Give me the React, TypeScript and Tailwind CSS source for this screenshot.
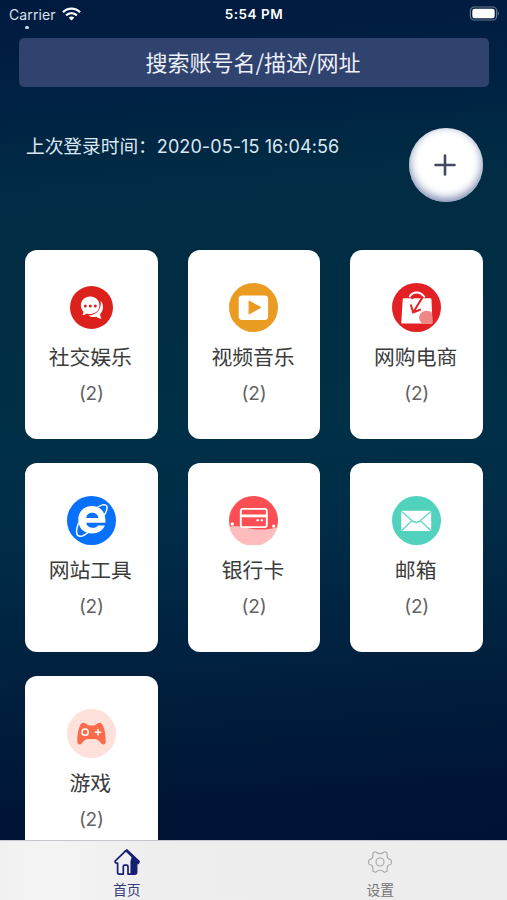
import type { ReactNode } from "react";

const cjk = "font-['Inter','Noto_Sans_CJK_SC',sans-serif]";

function Disc({ children, fill, r = 24.5 }: { children: ReactNode; fill: string; r?: number }) {
  return (
    <svg viewBox="0 0 49 49" className="block h-[49px] w-[49px]" fill="none">
      <circle cx="24.5" cy="24.5" r={r} fill={fill} />
      {children}
    </svg>
  );
}

const ChatIcon = () => (
  <Disc fill="#dc211d" r={21.5}>
    <path
      d="M33.6 17.8C36.6 20.6 37 27.6 33.2 31C33 32.800 33.800 34.500 34.500 35.800C32.200 35.600 30.600 34.600 29.400 33.700C26.300 34.500 23.300 33.900 21.600 32.500C29 32.500 35.300 26 33.600 17.800Z"
      fill="#fff"
    />
    <path
      d="M23.200 13.600C28.500 13.600 32.500 17.500 32.500 22.300C32.500 27.200 28.500 31 23.200 31C21.900 31 20.700 30.800 19.600 30.400C18.400 31.400 16.900 32 15.300 32.100C16.200 31 16.500 30 16.400 28.500C14.800 26.900 13.900 24.800 13.900 22.300C13.900 17.500 17.900 13.600 23.200 13.600Z"
      fill="#fff"
    />
    <g fill="#dc211d">
      <circle cx="18.300" cy="23" r="1.500" />
      <circle cx="23.300" cy="23" r="1.500" />
      <circle cx="28.300" cy="23" r="1.500" />
    </g>
  </Disc>
);

const VideoIcon = () => (
  <Disc fill="#e99b22">
    <rect x="9.700" y="12.600" width="29.400" height="24.400" rx="3.400" fill="#fff" />
    <path d="M20.200 18.200V30.600L31.300 24.400Z" fill="#e99b22" stroke="#e99b22" strokeWidth="1.300" strokeLinejoin="round" />
  </Disc>
);

const ShopIcon = () => (
  <Disc fill="#e32024">
    <path d="M12 15.300H38.200Q39.400 15.300 39.500 16.500L40.400 39.400Q40.400 40.600 39.200 40.600H10.400Q9.200 40.600 9.300 39.400L10.700 16.500Q10.800 15.300 12 15.300Z" fill="#fff" />
    <path d="M17.800 13.400C20.500 8.300 28.300 7.800 32.200 13.700" stroke="#fff" strokeWidth="2" strokeLinecap="round" />
    <path d="M20 16C21.500 11.300 27.500 11.500 30.300 14.600L21.300 29.300M18.700 21.500L21.200 29.500L28.800 26.500" stroke="#e32024" strokeWidth="2" />
    <path d="M39.900 29.600L40.400 40.600H30.300C25.500 37 26.200 29.700 32.300 28C35 27.300 38 28 39.900 29.600Z" fill="#f08786" />
  </Disc>
);

const BrowserIcon = () => (
  <Disc fill="#0870fb">
    <path
      d="M29.500 12C33.500 8.600 38.500 7.700 39.700 10C40.600 11.800 39.700 15 37.700 18.600M12.600 25C9.800 30 8.600 36.500 10.500 39C12.600 41.500 17.500 39.500 21.700 36"
      stroke="#fff"
      strokeWidth="1.500"
      strokeLinecap="round"
    />
    <path
      fillRule="evenodd"
      d="M25 10C33.300 10 39 15.800 38.500 26.800H19.300C19.700 32.600 28.800 33.300 30.900 29.500H37.900C35.700 34.600 31 37.500 25 37.500C16.700 37.500 11.300 31.700 11.300 23.700C11.300 15.700 17 10 25 10ZM19.300 21.900H31.300C30.800 15.100 19.800 15.100 19.300 21.900Z"
      fill="#fff"
    />
  </Disc>
);

const CardIcon = () => (
  <Disc fill="#fc4e53">
    <path d="M.4 30.700C8 28.600 15.500 32 24 33C33 34.300 41 33.200 48.200 31.200A24.500 24.500 0 0 1 .4 30.700Z" fill="#ffbcbf" />
    <rect x="11.800" y="12.900" width="26" height="18.200" rx="2" fill="#fc4e53" stroke="#fff" strokeWidth="1.900" />
    <path d="M12 19.900H37.600" stroke="#fff" strokeWidth="2.800" />
    <g fill="#fff">
      <circle cx="28.700" cy="24.300" r="1.200" />
      <circle cx="32.800" cy="24.300" r="1.200" />
      <circle cx="3.300" cy="28" r="1.700" />
      <circle cx="44.700" cy="30.100" r="1.700" />
    </g>
  </Disc>
);

const MailIcon = () => (
  <Disc fill="#50d2bd">
    <rect x="9.200" y="14.700" width="30" height="20.300" rx=".8" fill="#fff" />
    <path d="M9.600 15.400L21.600 26L22.800 25.400L24.200 26.800L25.600 25.400L26.800 26L38.800 15.400M9.700 34.500L20 24.600M38.700 34.500L28.400 24.600" stroke="#50d2bd" strokeWidth="1.200" />
  </Disc>
);

const GameIcon = () => (
  <Disc fill="#ffe1dc">
    <path
      d="M16 13.700C18.300 13.700 19.500 15.600 21.200 16.200C23 16.700 26 16.700 27.800 16.200C29.500 15.600 30.700 13.700 33 13.700C36.500 13.700 38.800 24 38.700 32.400C38.700 35.800 36 36.200 34.200 34.200C31.700 31.400 30 30 27.500 30H21.500C19 30 17.300 31.400 14.800 34.200C13 36.200 10.300 35.800 10.300 32.400C10.200 24 12.500 13.700 16 13.700Z"
      fill="#fb6b4b"
    />
    <circle cx="18.100" cy="23.200" r="3.100" stroke="#fff" strokeWidth="1.500" />
    <path d="M31 19.900V26.500M27.700 23.200H34.300" stroke="#fff" strokeWidth="1.500" />
  </Disc>
);

const categories: { name: string; icon: ReactNode }[] = [
  { name: "社交娱乐", icon: <ChatIcon /> },
  { name: "视频音乐", icon: <VideoIcon /> },
  { name: "网购电商", icon: <ShopIcon /> },
  { name: "网站工具", icon: <BrowserIcon /> },
  { name: "银行卡", icon: <CardIcon /> },
  { name: "邮箱", icon: <MailIcon /> },
  { name: "游戏", icon: <GameIcon /> },
];

function StatusBar() {
  return (
    <div className="relative grid h-[38px] shrink-0 grid-cols-3 pr-[7px] pl-[9px] text-white">
      <div className="flex h-7 items-center gap-[6px]">
        <span className="text-[14px] tracking-[0.120px] text-[#dbe1ec]">Carrier</span>
        <svg viewBox="0 0 19 14" className="h-[14px] w-[19px]" fill="none" stroke="#fff" strokeWidth="2.300">
          <path d="M1 5.300C5.700.4 13.300.4 18 5.300M4.100 8.400C7.200 5.300 11.800 5.300 14.900 8.400" />
          <path d="M9.500 13.500L6.700 10.700C8.300 9.200 10.700 9.200 12.300 10.700Z" fill="#fff" stroke="none" />
        </svg>
      </div>
      <div className="flex h-7 items-center justify-center pr-[1px] text-[13.500px] font-semibold tracking-[0.500px]">5:54 PM</div>
      <div className="flex h-[26px] items-center justify-end">
        <svg viewBox="0 0 31 15" className="h-[15px] w-[31px]" fill="none">
          <rect x="1.400" y="1" width="26.200" height="13" rx="3.800" stroke="#66788d" strokeWidth="1.200" />
          <rect x="3.300" y="2.800" width="22.400" height="9.400" rx="2.200" fill="#fff" />
          <path d="M28.800 5.300Q31 7.500 28.800 9.700Z" fill="#66788d" />
        </svg>
      </div>
      <span className="absolute top-[26px] left-[25px] h-[3px] w-1 rounded-full bg-[#c9d8ea]" />
    </div>
  );
}

function HomeIcon() {
  return (
    <svg viewBox="0 0 26 26" className="h-[26px] w-[26px]" fill="none" stroke="#172071" strokeWidth="1.700" strokeLinejoin="round">
      <path d="M13 1L25 12.300Q25.100 14.900 22.600 14.300V23.500Q22.600 25.100 20.800 25.100H16.500L17.500 23V12L11 2.500Z" fill="#172071" />
      <path d="M11.900 1.600L1.100 12.200Q1 14.600 3.600 14V23.500Q3.600 25.100 5.300 25.100H9.300V17.500Q9.300 16.200 10.600 16.200H12.700Q14 16.200 14 17.500V25.100H17.300V12.500L18.200 9.500V7.600Z" fill="#f0f0f2" />
    </svg>
  );
}

function GearIcon() {
  return (
    <svg viewBox="0 0 24 22" className="h-[22px] w-6" fill="none" stroke="#a6a6a6" strokeWidth="1.100" strokeLinejoin="round">
      <path d="M6.700.9Q7.500.5 8.200 1.200Q12 4.200 15.800 1.200Q16.500.5 17.300.9L18.800 1.700Q19.400 2.200 19.100 3.200Q18.400 7.500 22.600 8.700Q23.300 9 23.300 9.700V12.300Q23.300 13 22.600 13.300Q18.400 14.500 19.100 18.800Q19.400 19.800 18.800 20.300L17.300 21.100Q16.500 21.500 15.800 20.800Q12 17.800 8.200 20.800Q7.500 21.500 6.700 21.100L5.200 20.300Q4.600 19.800 4.900 18.800Q5.600 14.500 1.400 13.300Q.7 13 .7 12.300V9.700Q.7 9 1.400 8.700Q5.600 7.500 4.900 3.200Q4.600 2.200 5.200 1.700Z" />
      <circle cx="12" cy="11" r="4" />
    </svg>
  );
}

export default function App() {
  return (
    <div
      className={`flex h-[900px] w-[507px] flex-col overflow-hidden bg-[linear-gradient(176deg,#001a3e_0%,#002044_10%,#002b44_20%,#002d43_34%,#003047_48%,#002c47_58%,#00213f_72%,#001435_88%,#001233_100%)] ${cjk}`}
    >
      <StatusBar />
      <div className="mr-[18px] ml-[19px] flex h-[49px] shrink-0 items-center justify-center rounded-[5px] bg-[#30426e] pr-[2px] pb-[3px] font-['Noto_Sans_CJK_SC',sans-serif] text-[22px] text-[#edf1fa]">
        搜索账号名/描述/网址
      </div>
      <div className="flex h-[163px] shrink-0 items-start justify-between pt-[40px] pr-6 pl-[26px]">
        <div className="flex h-10 items-center text-[18.700px] whitespace-nowrap text-[#dce7f1]">
          <span>上次登录时间：</span>
          <span className="-mt-[2px] text-[18px] tracking-[0.090px]">2020-05-15 16:04:56</span>
        </div>
        <button className="mt-[0.500px] flex h-[74px] w-[74px] items-center justify-center rounded-full bg-white shadow-[inset_0_-3px_10px_0px_#7180ab]">
          <svg viewBox="0 0 22 22" className="mr-[3px] h-[22px] w-[22px]" stroke="#444961" strokeWidth="2.600" strokeLinecap="round">
            <path d="M11 1.500V20.500M1.500 11H20.500" />
          </svg>
        </button>
      </div>
      <main className="grid min-h-0 flex-1 auto-rows-[188.500px] grid-cols-3 gap-x-[30px] gap-y-[24.500px] overflow-hidden pr-6 pl-[25px]">
        {categories.map(({ name, icon }) => (
          <section key={name} className="flex flex-col items-center rounded-[12px] bg-white pt-[33px]">
            {icon}
            <h2 className="mt-[11px] mr-[2px] text-[20.800px] leading-[30px] text-[#3b3b3b]">{name}</h2>
            <p className="mt-[6px] text-[19px] leading-[30px] tracking-[-0.200px] text-[#626262]">(2)</p>
          </section>
        ))}
      </main>
      <nav className="grid h-[60px] shrink-0 grid-cols-2 border-t border-[#c5c7cd] bg-[linear-gradient(90deg,#f1f1f1,#f4f4f4_10%,#eeeeef_30%,#ededed)] text-[13.800px] leading-5">
        <a className="flex flex-col items-center pt-[8px] text-[#343d7c]">
          <HomeIcon />
          <span className="mt-[5px]">首页</span>
        </a>
        <a className="flex flex-col items-center pt-[10px] text-[#747474]">
          <GearIcon />
          <span className="mt-[7px]">设置</span>
        </a>
      </nav>
    </div>
  );
}
